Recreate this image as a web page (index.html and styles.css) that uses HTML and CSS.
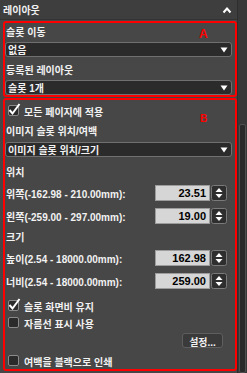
FILE: index.html
```html
<!DOCTYPE html>
<html lang="ko">

<head>
    <meta charset="UTF-8">
    <meta name="viewport" content="width=device-width, initial-scale=1.0">
    <title>레이아웃</title>
    <link rel="stylesheet" href="styles.css">
</head>

<body>
    <div class="window">
        <div class="panel">
            <div class="panel-header">
                <span>레이아웃</span>
                <svg class="chevron" width="10" height="8" viewBox="0 0 10 8">
                    <polyline points="1.5,6.5 5,2.5 8.5,6.5" fill="none" stroke="#fff" stroke-width="2" />
                </svg>
            </div>

            <!-- Group A: slot move / registered layout -->
            <div class="group group-a">
                <span class="mark mark-a">A</span>
                <div class="label">슬롯 이동</div>
                <div class="select">
                    <span>없음</span>
                    <svg class="arrow" width="8" height="6" viewBox="0 0 8 6"><polygon points="0.5,0.5 7.5,0.5 4,5.5" fill="#fff" /></svg>
                </div>
                <div class="label label-gap">등록된 레이아웃</div>
                <div class="select">
                    <span>슬롯 1개</span>
                    <svg class="arrow" width="8" height="6" viewBox="0 0 8 6"><polygon points="0.5,0.5 7.5,0.5 4,5.5" fill="#fff" /></svg>
                </div>
            </div>

            <!-- Group B: image slot position -->
            <div class="group group-b">
                <span class="mark mark-b">B</span>
                <div class="check check-top">
                    <svg class="box" width="13" height="14" viewBox="0 0 13 14">
                        <rect x="0.5" y="2.5" width="10" height="10" rx="1.5" fill="#2b2b2b" stroke="#8a8a8a" />
                        <polyline points="1.5,7 4.5,10.5 11.5,1" fill="none" stroke="#fff" stroke-width="2" />
                    </svg>
                    모든 페이지에 적용
                </div>
                <div class="label">이미지 슬롯 위치/여백</div>
                <div class="select">
                    <span>이미지 슬롯 위치/크기</span>
                    <svg class="arrow" width="8" height="6" viewBox="0 0 8 6"><polygon points="0.5,0.5 7.5,0.5 4,5.5" fill="#fff" /></svg>
                </div>

                <div class="section">위치</div>
                <div class="field">
                    <span class="field-name">위쪽(-162.98 - 210.00mm):</span>
                    <div class="num">23.51</div>
                    <svg class="spin" width="16" height="16" viewBox="0 0 16 16">
                        <rect x="0.5" y="0.5" width="15" height="15" rx="2" fill="#2e2e2e" stroke="#7a7a7a" />
                        <polygon points="4.5,7 8,3 11.5,7" fill="#fff" />
                        <polygon points="4.5,9 8,13 11.5,9" fill="#fff" />
                    </svg>
                </div>
                <div class="field field-gap">
                    <span class="field-name">왼쪽(-259.00 - 297.00mm):</span>
                    <div class="num">19.00</div>
                    <svg class="spin" width="16" height="16" viewBox="0 0 16 16">
                        <rect x="0.5" y="0.5" width="15" height="15" rx="2" fill="#2e2e2e" stroke="#7a7a7a" />
                        <polygon points="4.5,7 8,3 11.5,7" fill="#fff" />
                        <polygon points="4.5,9 8,13 11.5,9" fill="#fff" />
                    </svg>
                </div>

                <div class="section section-size">크기</div>
                <div class="field">
                    <span class="field-name">높이(2.54 - 18000.00mm):</span>
                    <div class="num">162.98</div>
                    <svg class="spin" width="16" height="16" viewBox="0 0 16 16">
                        <rect x="0.5" y="0.5" width="15" height="15" rx="2" fill="#2e2e2e" stroke="#7a7a7a" />
                        <polygon points="4.5,7 8,3 11.5,7" fill="#fff" />
                        <polygon points="4.5,9 8,13 11.5,9" fill="#fff" />
                    </svg>
                </div>
                <div class="field field-gap">
                    <span class="field-name">너비(2.54 - 18000.00mm):</span>
                    <div class="num">259.00</div>
                    <svg class="spin" width="16" height="16" viewBox="0 0 16 16">
                        <rect x="0.5" y="0.5" width="15" height="15" rx="2" fill="#2e2e2e" stroke="#7a7a7a" />
                        <polygon points="4.5,7 8,3 11.5,7" fill="#fff" />
                        <polygon points="4.5,9 8,13 11.5,9" fill="#fff" />
                    </svg>
                </div>

                <div class="check check-ratio">
                    <svg class="box" width="13" height="14" viewBox="0 0 13 14">
                        <rect x="0.5" y="2.5" width="10" height="10" rx="1.5" fill="#2b2b2b" stroke="#8a8a8a" />
                        <polyline points="1.5,7 4.5,10.5 11.5,1" fill="none" stroke="#fff" stroke-width="2" />
                    </svg>
                    슬롯 화면비 유지
                </div>
                <div class="check check-crop">
                    <svg class="box" width="13" height="14" viewBox="0 0 13 14">
                        <rect x="0.5" y="2.5" width="10" height="10" rx="1.5" fill="#2b2b2b" stroke="#8a8a8a" />
                    </svg>
                    자름선 표시 사용
                </div>
                <div class="button-row">
                    <button class="settings-btn">설정...</button>
                </div>
                <div class="check check-black">
                    <svg class="box" width="13" height="14" viewBox="0 0 13 14">
                        <rect x="0.5" y="2.5" width="10" height="10" rx="1.5" fill="#2b2b2b" stroke="#8a8a8a" />
                    </svg>
                    여백을 블랙으로 인쇄
                </div>
            </div>
        </div>

        <div class="scrollbar">
            <div class="thumb"></div>
        </div>
    </div>
</body>

</html>
```

FILE: styles.css
```css
/* General Styles */
body {
    margin: 0;
    background-color: #474747;
    font-family: "Liberation Sans", "Noto Sans CJK KR", sans-serif;
    font-size: 10px;
    font-weight: bold;
    color: #f2f2f2;
}

.window {
    display: flex;
    width: 247px;
    height: 373px;
    overflow: hidden;
}

.panel {
    width: 237px;
    padding-left: 3px;
    box-sizing: border-box;
}

.panel-header {
    display: flex;
    align-items: center;
    justify-content: space-between;
    height: 19px;
    margin-left: -3px;
    padding: 0 5px 0 3px;
    background-color: #3e3e3e;
    border-bottom: 1px solid #333;
}

.chevron {
    margin-top: 1px;
}

/* Red framed groups */
.group {
    position: relative;
    border: 2px solid #f00;
    border-radius: 3px;
    padding-right: 3px;
}

.group-a {
    margin-top: 1px;
}

.group-b {
    margin-top: 1px;
}

.mark {
    position: absolute;
    color: #f00;
    font-family: "Liberation Sans", sans-serif;
    font-weight: bold;
}

.mark-a {
    left: 194px;
    top: 4px;
    font-size: 12px;
}

.mark-b {
    left: 195px;
    top: 13px;
    font-size: 10px;
}

.label {
    line-height: 19px;
    padding-left: 1px;
}

.label-gap {
    margin-top: 4px;
}

.group-b .label {
    line-height: 20px;
}

/* Drop down */
.select {
    display: flex;
    align-items: center;
    justify-content: space-between;
    height: 15px;
    box-sizing: border-box;
    padding: 0 3px 0 2px;
    background-color: #2b2b2b;
    border: 1px solid #707070;
    border-radius: 3px;
}

.section {
    margin-top: 7px;
    line-height: 18px;
    padding-left: 1px;
}

.section-size {
    margin-top: 5px;
    margin-bottom: 3px;
}

/* Number fields */
.field {
    display: flex;
    align-items: center;
    height: 16px;
    margin-top: 3px;
    margin-right: 5px;
}

.field-gap {
    margin-top: 7px;
}

.section-size + .field {
    margin-top: 0;
}

.field-name {
    flex: 1;
    padding-left: 1px;
}

.num {
    width: 55px;
    height: 16px;
    box-sizing: border-box;
    padding-right: 3px;
    line-height: 14px;
    text-align: right;
    color: #000;
    font-size: 11px;
    background-color: #d6d6d6;
    border: 1px solid #9c9c9c;
}

.spin {
    margin-left: 1px;
}

/* Checkboxes */
.check {
    display: flex;
    align-items: center;
    gap: 3px;
    padding-left: 3px;
}

.check .box {
    margin-top: -3px;
}

.check-top {
    height: 22px;
}

.check-ratio {
    height: 18px;
    margin-top: 8px;
}

.check-crop {
    height: 16px;
}

.check-black {
    height: 16px;
    margin-top: 5px;
}

.button-row {
    display: flex;
    justify-content: flex-end;
    margin-top: 2px;
    padding-right: 9px;
}

.settings-btn {
    width: 41px;
    height: 15px;
    padding: 0;
    font-family: inherit;
    font-size: 10px;
    font-weight: bold;
    color: #f2f2f2;
    background-color: #3a3a3a;
    border: 1px solid #5e5e5e;
    border-radius: 3px;
}

/* Scrollbar */
.scrollbar {
    width: 10px;
    background-color: #383838;
    border-left: 1px solid #2e2e2e;
    box-sizing: border-box;
    padding-top: 124px;
}

.thumb {
    width: 7px;
    height: 249px;
    margin-left: 1px;
    box-sizing: border-box;
    background-color: #2a2a2a;
    border: 1px solid #505050;
    border-radius: 2px;
}
```
